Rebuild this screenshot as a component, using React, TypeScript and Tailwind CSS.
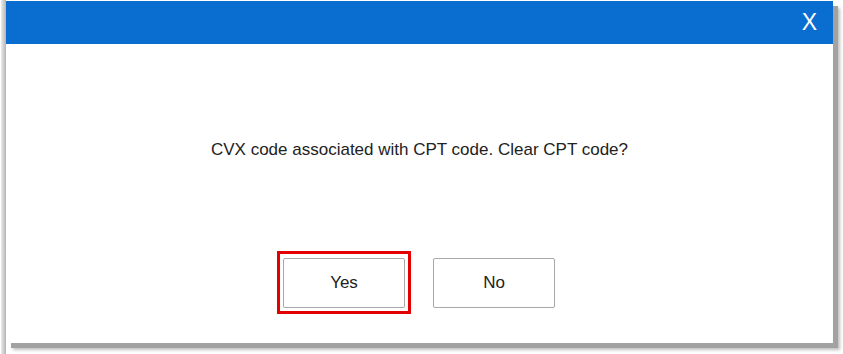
export default function App() {
  return (
    <div className="flex w-[843px] h-[354px] bg-white overflow-hidden font-['Liberation_Sans',Arial,sans-serif]">
      <div className="w-[6px] h-full bg-gradient-to-r from-[#ececec] to-[#b4b4b4] border-l border-white" />
      <div className="flex flex-col mt-[1px] w-[827px] h-[342px] bg-white shadow-[5px_5px_0_#a2a2a2,7px_7px_3px_rgba(0,0,0,0.25)]">
        <div className="flex items-center justify-end h-[43px] bg-[#0a6ed1] pr-[16px]">
          <span className="text-white text-[23px] leading-none">X</span>
        </div>
        <div className="flex flex-col items-center flex-1">
          <p className="mt-[96px] text-[17px] leading-[20px] text-[#222]">
            CVX code associated with CPT code. Clear CPT code?
          </p>
          <div className="flex items-center gap-[22px] mt-[91px] mr-[7px]">
            <div className="border-[3px] border-[#e30000] px-[3px] pt-[4px] pb-[3px]">
              <button className="w-[122px] h-[50px] rounded-[2px] border border-[#a8a8a8] bg-white text-[17px] text-[#222]">
                Yes
              </button>
            </div>
            <button className="w-[122px] h-[50px] rounded-[2px] border border-[#a8a8a8] bg-white text-[17px] text-[#222]">
              No
            </button>
          </div>
        </div>
      </div>
    </div>
  );
}
